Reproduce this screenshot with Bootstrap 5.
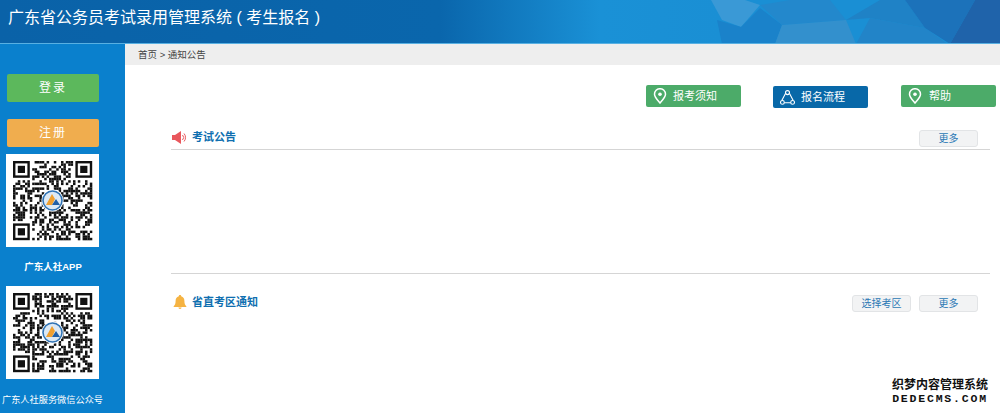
<!DOCTYPE html>
<html lang="zh-CN">
<head>
    <meta charset="UTF-8">
    <meta name="viewport" content="width=device-width, initial-scale=1.0">
    <title>广东省公务员考试录用管理系统</title>
    <link href="https://cdn.jsdelivr.net/npm/bootstrap@5.3.0/dist/css/bootstrap.min.css" rel="stylesheet">
    <script src="https://cdn.jsdelivr.net/npm/bootstrap@5.3.0/dist/js/bootstrap.bundle.min.js"></script>
    <style>
        html, body { height: 413px; overflow: hidden; }
        body { font-family: "Liberation Sans", "Noto Sans CJK SC", sans-serif; font-size: 12px; background: #fff; position: relative; }
        .top-head { height: 44px; position: relative; overflow: hidden; background: linear-gradient(90deg, #0a62a8 0, #0a66ac 440px, #1a91d6 600px, #1a8fd4 720px); border-bottom: 1px solid #58b0e2; }
        .top-head svg { position: absolute; left: 0; top: 0; }
        .top-title { position: relative; margin: 0; padding: 9px 0 0 8px; font-size: 16px; font-weight: 400; line-height: 18px; color: #fff; }
        .page-body { height: 369px; }
        .side-col { width: 125px; flex: none; background: #0a80cd; padding: 30px 26px 0 6px; }
        .side-btn { display: block; width: 92px; height: 28px; margin-left: 1px; padding: 0; border: 0; border-radius: 2px; font-size: 12px; line-height: 29px; color: #fff; letter-spacing: 2px; }
        .side-green { background: #5cb85c; }
        .side-orange { background: #f0ad4e; margin-top: 17px; }
        .qr-box { width: 93px; height: 93px; background: #fff; display: block; }
        .qr-first { margin-top: 7px; }
        .qr-label { width: 125px; margin-left: -6px; text-align: center; color: #fff; white-space: nowrap; font-size: 9px; font-weight: 700; line-height: 12px; }
        .label-app { padding-right: 19px; margin-top: 14px; margin-bottom: 13px; font-size: 9.5px; }
        .label-wx { padding-right: 20px; margin-top: 15px; font-weight: 400; font-size: 9.2px; }
        .main-col { flex: 1; min-width: 0; }
        .crumb-bar { height: 21px; background: #eee; padding-left: 13px; font-size: 9.5px; line-height: 21px; color: #444; }
        .quick-row { padding: 20px 4px 0 0; gap: 32px; }
        .quick-btn { width: 95px; height: 22px; border-radius: 2px; color: #fff; font-size: 11px; line-height: 22px; padding-left: 7px; gap: 6px; }
        .quick-green { background: #4cab69; }
        .quick-blue { background: #0868a8; margin-top: 1px; }
        .quick-last { margin-left: 1px; gap: 7px; }
        .sect-area { margin: 22px 10px 0 46px; }
        .sect-head { height: 20px; border-bottom: 1px solid #d5d5d5; padding-right: 12px; }
        .sect-body { height: 124px; border-bottom: 1px solid #d5d5d5; }
        .sect-title { font-size: 11px; font-weight: 700; line-height: 14px; color: #0f6fb0; gap: 5px; padding-top: 0; }
        .sect-title svg { margin-left: 1px; }
        .sect-title .bell-icon { margin-left: 2px; }
        .sect-two { margin-top: 21px; padding-right: 12px; }
        .more-btn { width: 59px; height: 17px; padding: 0; background: #f2f3f4; border: 1px solid #e2e4e6; border-radius: 3px; font-size: 10px; line-height: 15px; color: #2a78b5; }
        .mark-stamp { position: absolute; right: 11px; bottom: 8px; width: 98px; color: #111; text-align: center; font-weight: 700; text-shadow: 1px 0 #fff, -1px 0 #fff, 0 1px #fff, 0 -1px #fff; }
        .mark-cn { font-size: 12px; line-height: 15px; }
        .mark-en { font-family: "Liberation Mono", monospace; font-size: 11.5px; line-height: 12px; letter-spacing: 1.8px; white-space: nowrap; }
    </style>
</head>
<body>
    <header class="top-head">
        <svg width="1000" height="44" viewBox="0 0 1000 44">
            <polygon points="711,0 745,0 760,5 741,27 722,20" fill="#3a99d6"/>
            <polygon points="741,27 760,8 782,25 775,44 722,44 717,20" fill="#1a82ca"/>
            <polygon points="760,5 790,0 830,0 846,20 782,25" fill="#2388cc"/>
            <polygon points="782,25 846,20 856,44 775,44" fill="#3390cd"/>
            <polygon points="846,20 880,0 905,0 925,28 870,18" fill="#1f82c6"/>
            <polygon points="870,18 925,28 948,44 856,44" fill="#2284c8"/>
            <polygon points="905,0 975,0 950,44 925,28" fill="#1c72ba"/>
            <polygon points="975,0 1000,0 1000,44 950,44" fill="#1f63aa"/>
        </svg>
        <h1 class="top-title">广东省公务员考试录用管理系统 ( 考生报名 )</h1>
    </header>
    <div class="page-body d-flex">
        <aside class="side-col">
            <button class="btn side-btn side-green" type="button">登录</button>
            <button class="btn side-btn side-orange" type="button">注册</button>
            <svg class="qr-box qr-first" data-seed="37" viewBox="0 0 93 93"></svg>
            <div class="qr-label label-app">广东人社APP</div>
            <svg class="qr-box" data-seed="91" viewBox="0 0 93 93"></svg>
            <div class="qr-label label-wx">广东人社服务微信公众号</div>
        </aside>
        <main class="main-col">
            <div class="crumb-bar">首页 &gt; 通知公告</div>
            <div class="quick-row d-flex justify-content-end align-items-start">
                <a class="quick-btn quick-green d-flex align-items-center text-decoration-none" href="#">
                    <svg width="14" height="16" viewBox="0 0 14 16" fill="none" stroke="#fff" stroke-width="1.5"><path d="M7 15C4 11.5 1.5 9 1.5 6.2a5.5 5.5 0 0 1 11 0C12.5 9 10 11.5 7 15z"/><circle cx="7" cy="6.2" r="1.8" fill="#fff" stroke="none"/></svg>
                    <span>报考须知</span>
                </a>
                <a class="quick-btn quick-blue d-flex align-items-center text-decoration-none" href="#">
                    <svg width="15" height="15" viewBox="0 0 15 15" fill="none" stroke="#fff" stroke-width="1.1"><path d="M5.6 3.2L1.8 10.4M9.4 3.2l3.8 7.2M4.2 12.8h6.6"/><circle cx="7.5" cy="2.6" r="2"/><circle cx="2.4" cy="12.4" r="1.9"/><circle cx="12.6" cy="12.4" r="1.9"/></svg>
                    <span>报名流程</span>
                </a>
                <a class="quick-btn quick-green quick-last d-flex align-items-center text-decoration-none" href="#">
                    <svg width="14" height="16" viewBox="0 0 14 16" fill="none" stroke="#fff" stroke-width="1.5"><path d="M7 15C4 11.5 1.5 9 1.5 6.2a5.5 5.5 0 0 1 11 0C12.5 9 10 11.5 7 15z"/><circle cx="7" cy="6.2" r="1.8" fill="#fff" stroke="none"/></svg>
                    <span>帮助</span>
                </a>
            </div>
            <div class="sect-area">
                <div class="sect-head d-flex justify-content-between align-items-start">
                    <div class="sect-title d-flex align-items-center">
                        <svg width="15" height="13" viewBox="0 0 15 13"><path d="M0 4h3l6-4v13L3 9H0z" fill="#e9575c"/><path d="M10.5 4a3.5 3.5 0 0 1 0 5M12 2.5a6 6 0 0 1 0 8" fill="none" stroke="#e9575c" stroke-width="1"/></svg>
                        <span>考试公告</span>
                    </div>
                    <button class="btn more-btn" type="button">更多</button>
                </div>
                <div class="sect-body"></div>
                <div class="sect-two d-flex justify-content-between align-items-start">
                    <div class="sect-title d-flex align-items-center">
                        <svg class="bell-icon" width="14" height="14" viewBox="0 0 14 14" fill="#f5b342"><path d="M7 0c.8 0 1.2.5 1.2 1.2C10.4 1.8 11.4 3.600 11.400 6c0 2.600.6 4 2 5.400V12H.6v-.6c1.400-1.400 2-2.800 2-5.400 0-2.400 1-4.200 3.200-4.800C5.800.5 6.200 0 7 0z"/><path d="M5.400 12.600h3.200a1.600 1.400 0 0 1-3.200 0z"/></svg>
                        <span>省直考区通知</span>
                    </div>
                    <div class="d-flex gap-2">
                        <button class="btn more-btn" type="button">选择考区</button>
                        <button class="btn more-btn" type="button">更多</button>
                    </div>
                </div>
            </div>
        </main>
    </div>
    <div class="mark-stamp">
        <div class="mark-cn">织梦内容管理系统</div>
        <div class="mark-en">DEDECMS.COM</div>
    </div>
    <script>
        // fake qr pattern, modules are seeded so the picture stays the same every run
        function drawQr(svg) {
            let seed = parseInt(svg.dataset.seed);
            const rnd = () => { seed = (seed * 16807) % 2147483647; return seed / 2147483647; };
            const size = 33, cell = 2.4, start = 7;
            let out = '';
            const inFinder = (x, y) => (x < 8 && y < 8) || (x > size - 9 && y < 8) || (x < 8 && y > size - 9);
            for (let y = 0; y < size; y++) {
                for (let x = 0; x < size; x++) {
                    if (!inFinder(x, y) && rnd() > 0.5) {
                        out += `<rect x="${start + x * cell}" y="${start + y * cell}" width="${cell + 0.1}" height="${cell + 0.1}" fill="#111"/>`;
                    }
                }
            }
            [[0, 0], [size - 7, 0], [0, size - 7]].forEach(([x, y]) => {
                const px = start + x * cell, py = start + y * cell;
                out += `<rect x="${px + 1.2}" y="${py + 1.2}" width="${cell * 6}" height="${cell * 6}" fill="none" stroke="#111" stroke-width="2.4"/>`;
                out += `<rect x="${px + cell * 2}" y="${py + cell * 2}" width="${cell * 3}" height="${cell * 3}" fill="#111"/>`;
            });
            out += '<circle cx="46.500" cy="46.500" r="11" fill="#fff"/><circle cx="46.500" cy="46.500" r="9.500" fill="#dce9f5" stroke="#2f73b5" stroke-width="1.600"/>';
            out += '<path d="M40 51l6-11 3 5-3 6z" fill="#f0a030"/><path d="M46 51l4-6 4 6z" fill="#1f5fa8"/>';
            svg.innerHTML = out;
        }
        document.querySelectorAll('.qr-box').forEach(drawQr);
    </script>
</body>
</html>
